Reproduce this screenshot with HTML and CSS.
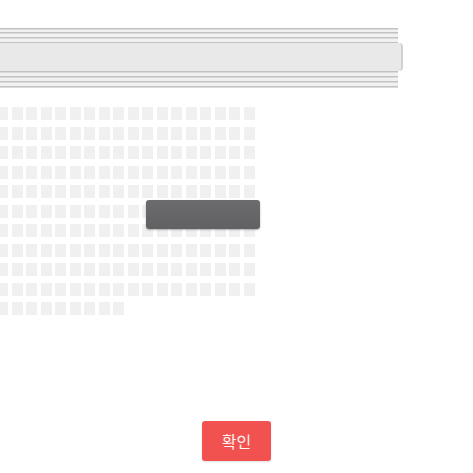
FILE: index.html
```html
<!DOCTYPE html>
<html lang="ko">
<head>
<meta charset="utf-8">
<link rel="stylesheet" href="styles.css">
</head>
<body>
<div class="page">
  <div class="header">
    <div class="line"></div>
    <div class="line g3"></div>
    <div class="line g4"></div>
    <div class="line g4"></div>
    <div class="fill"></div>
    <div class="line"></div>
    <div class="line g4"></div>
    <div class="line g4"></div>
    <div class="line g4"></div>
  </div>
  <div class="seats">
    <i></i><i></i><i></i><i></i><i></i><i></i><i></i><i></i><i></i><i></i><i></i><i></i><i></i><i></i><i></i><i></i><i></i><i></i>
    <i></i><i></i><i></i><i></i><i></i><i></i><i></i><i></i><i></i><i></i><i></i><i></i><i></i><i></i><i></i><i></i><i></i><i></i>
    <i></i><i></i><i></i><i></i><i></i><i></i><i></i><i></i><i></i><i></i><i></i><i></i><i></i><i></i><i></i><i></i><i></i><i></i>
    <i></i><i></i><i></i><i></i><i></i><i></i><i></i><i></i><i></i><i></i><i></i><i></i><i></i><i></i><i></i><i></i><i></i><i></i>
    <i></i><i></i><i></i><i></i><i></i><i></i><i></i><i></i><i></i><i></i><i></i><i></i><i></i><i></i><i></i><i></i><i></i><i></i>
    <i></i><i></i><i></i><i></i><i></i><i></i><i></i><i></i><i></i><i></i><i></i><i></i><i></i><i></i><i></i><i></i><i></i><i></i>
    <i></i><i></i><i></i><i></i><i></i><i></i><i></i><i></i><i></i><i></i><i></i><i></i><i></i><i></i><i></i><i></i><i></i><i></i>
    <i></i><i></i><i></i><i></i><i></i><i></i><i></i><i></i><i></i><i></i><i></i><i></i><i></i><i></i><i></i><i></i><i></i><i></i>
    <i></i><i></i><i></i><i></i><i></i><i></i><i></i><i></i><i></i><i></i><i></i><i></i><i></i><i></i><i></i><i></i><i></i><i></i>
    <i></i><i></i><i></i><i></i><i></i><i></i><i></i><i></i><i></i><i></i><i></i><i></i><i></i><i></i><i></i><i></i><i></i><i></i>
    <i></i><i></i><i></i><i></i><i></i><i></i><i></i><i></i><i></i>
  </div>
  <div class="toast"></div>
  <div class="actions">
    <button class="confirm">확인</button>
  </div>
</div>
</body>
</html>
```
FILE: styles.css
```css
html, body {
  margin: 0;
  padding: 0;
  background: #ffffff;
}
.page {
  position: relative;
  width: 473px;
  height: 473px;
  overflow: hidden;
  font-family: "Noto Sans CJK KR", "Noto Sans", sans-serif;
}
.header {
  margin-top: 28px;
  width: 398px;
  display: flex;
  flex-direction: column;
  background: #f1f1f1;
}
.line {
  height: 1px;
  background: #c2c2c2;
  box-shadow: 0 1px 0 #dadada;
}
.g3 { margin-top: 3px; }
.g4 { margin-top: 4px; }
.fill {
  height: 28px;
  width: 403px;
  background: #e9e9e9;
  border-right: 2px solid #d0d0d0;
  border-radius: 0 4px 4px 0;
  box-sizing: border-box;
}
.seats {
  margin-top: 20px;
  margin-left: -3px;
  display: grid;
  grid-template-columns: repeat(18, 11px);
  grid-auto-rows: 13px;
  column-gap: 3.5px;
  row-gap: 6.5px;
}
.seats i {
  display: block;
  background: #f0f0f0;
}
.toast {
  position: absolute;
  left: 146px;
  top: 200px;
  width: 114px;
  height: 29px;
  border-radius: 3px;
  background: linear-gradient(#6c6c6e, #616163);
  box-shadow: 0 1px 2px rgba(0,0,0,0.3);
}
.actions {
  display: flex;
  justify-content: center;
  margin-top: 106px;
}
.confirm {
  width: 69px;
  height: 40px;
  border: none;
  border-radius: 3px;
  background: #f1524f;
  color: #fff3f3;
  font-family: "Noto Sans CJK KR", "Noto Sans", sans-serif;
  font-size: 16px;
  padding: 0;
  box-shadow: 0 1px 2px rgba(0,0,0,0.12);
}
```
